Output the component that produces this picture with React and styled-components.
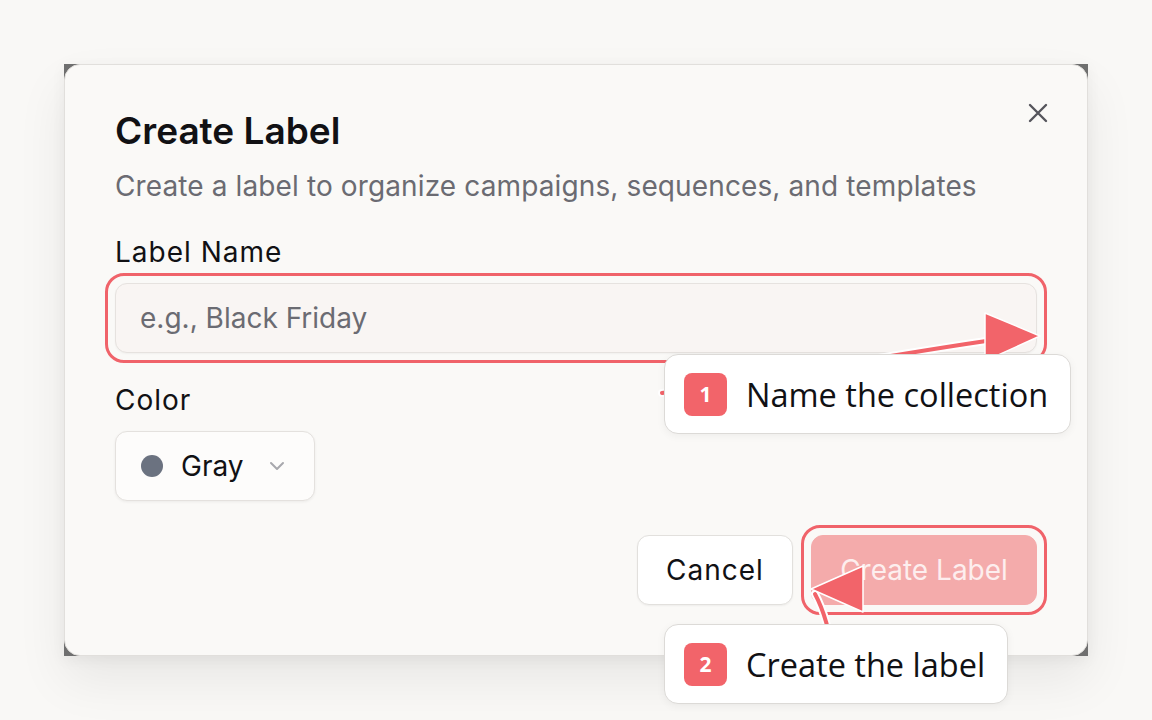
import React from "react"
import styled, { createGlobalStyle } from "styled-components"

const GlobalStyle = createGlobalStyle`
  * { box-sizing: border-box; }
  html, body {
    margin: 0;
    padding: 0;
    background: #f9f8f6;
    font-family: Inter, "Liberation Sans", sans-serif;
  }
`

const Page = styled.div`
  position: relative;
  width: 1152px;
  height: 720px;
  padding: 64px;
  overflow: hidden;
  background: #f9f8f6;
`

const Frame = styled.div`
  width: 1024px;
  background: #6f6f6f;
  box-shadow: 0 24px 48px rgba(0, 0, 0, 0.07), 0 4px 14px rgba(0, 0, 0, 0.05);
`

const Dialog = styled.div`
  position: relative;
  display: flex;
  flex-direction: column;
  padding: 46px 50px 50px 50px;
  background: #faf9f7;
  border: 1px solid #e1dfdc;
  border-radius: 16px;
`

const CloseButton = styled.button`
  position: absolute;
  top: 33px;
  right: 34px;
  width: 30px;
  height: 30px;
  padding: 0;
  border: none;
  background: transparent;
  display: flex;
  align-items: center;
  justify-content: center;
  color: #55555c;
`

const Title = styled.h2`
  margin: 0;
  font-size: 37px;
  line-height: 40px;
  font-weight: 600;
  color: #111114;
`

const Subtitle = styled.p`
  margin: 19px 0 0 0;
  font-size: 28px;
  line-height: 32px;
  letter-spacing: 0.12px;
  color: #6b6b72;
`

const Field = styled.div`
  display: flex;
  flex-direction: column;
  gap: 15px;
  margin-top: ${(p) => p.$top}px;
`

const Label = styled.label`
  font-size: 28px;
  line-height: 32px;
  font-weight: 400;
  letter-spacing: 1px;
  color: #111114;
`

const Spotlight = styled.div`
  position: relative;
  display: ${(p) => (p.$block ? "block" : "inline-block")};
  &::after {
    content: "";
    position: absolute;
    inset: -10px;
    border: 3px solid #f0636a;
    border-radius: 19px;
    pointer-events: none;
  }
`

const TextInput = styled.input`
  display: block;
  width: 100%;
  height: 70px;
  padding: 0 24px;
  border: 1px solid #e6e2df;
  border-radius: 12px;
  background: #f9f5f3;
  box-shadow: 0 1px 2px rgba(0, 0, 0, 0.04);
  font-family: Inter, "Liberation Sans", sans-serif;
  font-size: 28px;
  color: #111114;
  outline: none;
  &::placeholder {
    color: #6b6b72;
  }
`

const SelectButton = styled.button`
  width: 200px;
  height: 70px;
  display: flex;
  align-items: center;
  gap: 18px;
  padding: 0 0 0 25px;
  border: 1px solid #e4e1de;
  border-radius: 12px;
  background: #fdfcfb;
  box-shadow: 0 1px 3px rgba(0, 0, 0, 0.06);
  font-family: Inter, "Liberation Sans", sans-serif;
  font-size: 28px;
  color: #111114;
`

const Dot = styled.span`
  width: 22px;
  height: 22px;
  border-radius: 50%;
  background: ${(p) => p.$color};
`

const Chevron = styled.span`
  display: flex;
  margin-left: 4px;
  color: #a8a8ad;
`

const Footer = styled.div`
  display: flex;
  justify-content: flex-end;
  align-items: center;
  gap: 18px;
  margin-top: 34px;
`

const Button = styled.button`
  width: ${(p) => p.$w}px;
  height: 70px;
  padding: 0;
  border-radius: 12px;
  font-family: Inter, "Liberation Sans", sans-serif;
  font-size: 28px;
  font-weight: 400;
  letter-spacing: ${(p) => (p.$primary ? "0" : "1px")};
  white-space: nowrap;
  border: 1px solid ${(p) => (p.$primary ? "#f4abab" : "#e2e0dd")};
  background: ${(p) => (p.$primary ? "#f4abab" : "#ffffff")};
  color: ${(p) => (p.$primary ? "#fdeeee" : "#111114")};
  box-shadow: ${(p) => (p.$primary ? "none" : "0 1px 2px rgba(0,0,0,0.05)")};
`

const Arrows = styled.svg`
  position: absolute;
  left: 0;
  top: 0;
  width: 1152px;
  height: 720px;
  pointer-events: none;
`

const Callout = styled.div`
  position: absolute;
  left: ${(p) => p.$x}px;
  top: ${(p) => p.$y}px;
  height: 80px;
  display: flex;
  align-items: center;
  gap: 19px;
  padding: 0 22px 0 19px;
  background: #ffffff;
  border: 1px solid #dcdad7;
  border-radius: 14px;
  box-shadow: 0 2px 8px rgba(0, 0, 0, 0.05);
`

const Badge = styled.span`
  width: 43px;
  height: 43px;
  border-radius: 8px;
  background: #f2646a;
  color: #ffffff;
  display: flex;
  align-items: center;
  justify-content: center;
  font-family: "Open Sans", "Noto Sans", sans-serif;
  font-size: 21px;
  font-weight: 700;
`

const CalloutText = styled.span`
  font-family: "Open Sans", "Noto Sans", sans-serif;
  font-size: 32.5px;
  color: #111114;
  white-space: nowrap;
`

const RED = "#f2646a"

function Arrow({ d, head }) {
  return (
    <g>
      <path d={d} fill="none" stroke="#ffffff" strokeWidth="8" strokeLinecap="round" />
      <path d={d} fill="none" stroke={RED} strokeWidth="4" strokeLinecap="round" />
      <polygon points={head} fill={RED} stroke="#ffffff" strokeWidth="1.5" strokeLinejoin="round" />
    </g>
  )
}

export default function App() {
  return (
    <Page>
      <GlobalStyle />
      <Frame>
        <Dialog>
          <CloseButton aria-label="Close">
            <svg width="24" height="24" viewBox="0 0 24 24" fill="none" stroke="currentColor" strokeWidth="2.4" strokeLinecap="round">
              <path d="M4 4 L20 20 M20 4 L4 20" />
            </svg>
          </CloseButton>
          <Title>Create Label</Title>
          <Subtitle>Create a label to organize campaigns, sequences, and templates</Subtitle>

          <Field $top={34}>
            <Label>Label Name</Label>
            <Spotlight $block>
              <TextInput placeholder="e.g., Black Friday" />
            </Spotlight>
          </Field>

          <Field $top={31}>
            <Label>Color</Label>
            <SelectButton>
              <Dot $color="#6b7280" />
              Gray
              <Chevron>
                <svg width="24" height="24" viewBox="0 0 24 24" fill="none" stroke="currentColor" strokeWidth="2" strokeLinecap="round" strokeLinejoin="round">
                  <path d="M6 9 L12 15 L18 9" />
                </svg>
              </Chevron>
            </SelectButton>
          </Field>

          <Footer>
            <Button $w={156}>Cancel</Button>
            <Spotlight>
              <Button $primary $w={226}>Create Label</Button>
            </Spotlight>
          </Footer>
        </Dialog>
      </Frame>

      <Arrows viewBox="0 0 1152 720">
        <Arrow d="M662 393 C770 378, 880 356, 1000 339" head="1040,336 985,313 985,361" />
        <Arrow d="M834 660 Q828 618 815 594" head="811,589 863,566 863,612" />
      </Arrows>

      <Callout $x={664} $y={354}>
        <Badge>1</Badge>
        <CalloutText>Name the collection</CalloutText>
      </Callout>
      <Callout $x={664} $y={624}>
        <Badge>2</Badge>
        <CalloutText>Create the label</CalloutText>
      </Callout>
    </Page>
  )
}
